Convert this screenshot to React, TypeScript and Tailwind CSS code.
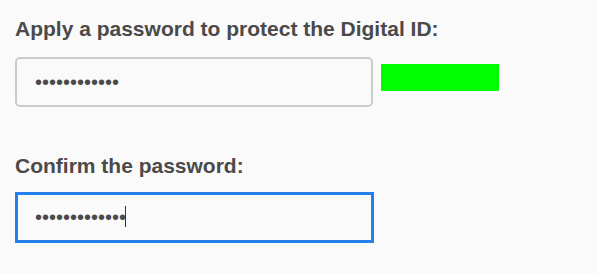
import { useState } from 'react'

export default function App() {
  const [pw, setPw] = useState('abcdefghijkl')
  const [confirm, setConfirm] = useState('abcdefghijklm')

  return (
    <div
      className="w-[597px] h-[274px] bg-[#fafafa] text-[#4a4a4a] px-[15px] pt-[17px]"
      style={{ fontFamily: '"Liberation Sans", Arial, sans-serif' }}
    >
      {/* New password */}
      <label className="block text-[21px] leading-[24px] font-bold">
        Apply a password to protect the Digital ID:
      </label>
      <div className="flex items-start gap-[8px] mt-[16px]">
        <input
          type="password"
          value={pw}
          onChange={(e) => setPw(e.target.value)}
          className="w-[358px] h-[50px] border-2 border-[#cbcbcb] rounded-[5px] bg-[#fafafa] pl-[18px] text-[20px] text-[#4a4a4a] outline-none"
        />
        <div className="mt-[7px] w-[118px] h-[27px] bg-[#00ff00]" />
      </div>

      {/* Confirm */}
      <label className="block mt-[47px] text-[21px] leading-[24px] font-bold">
        Confirm the password:
      </label>
      <div className="relative mt-[14px] w-[359px]">
        <input
          type="password"
          autoFocus
          value={confirm}
          onChange={(e) => setConfirm(e.target.value)}
          className="block w-[359px] h-[51px] border-[3px] border-[#2680eb] bg-[#fafafa] pl-[17px] text-[20px] text-[#4a4a4a] outline-none caret-transparent"
        />
        {/* caret */}
        <div className="absolute left-[110px] top-[14px] w-px h-[21px] bg-[#333]" />
      </div>
    </div>
  )
}
